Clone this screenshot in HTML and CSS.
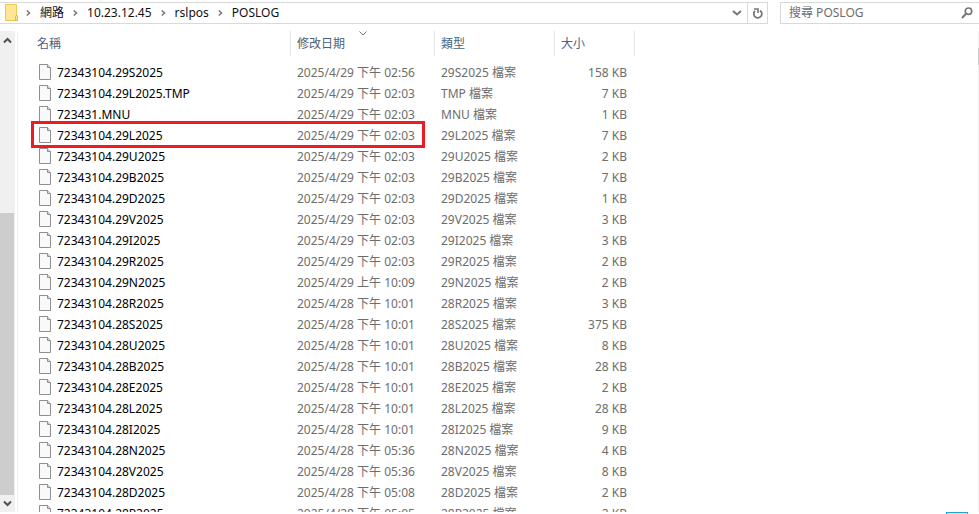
FILE: index.html
```html
<!DOCTYPE html>
<html lang="zh-Hant">
<head>
<meta charset="utf-8">
<title>POSLOG</title>
<link rel="stylesheet" href="styles.css">
</head>
<body>
<div class="explorer">
  <header class="toolbar">
    <nav class="address">
      <svg class="folder" viewBox="0 0 14 18"><path d="M.5 .5h11v11h1v5H.5z" fill="#ffe594" stroke="#ecc653"/><path d="M10.500 16.500v-4q0-1 1-1t1 1v4z" fill="#ffe594" stroke="#e3b63f"/></svg>
      <svg class="sep" viewBox="0 0 5 6"><path d="M.8 .5L3.500 3 .8 5.500"/></svg>
      <a href="#">網路</a>
      <svg class="sep" viewBox="0 0 5 6"><path d="M.8 .5L3.500 3 .8 5.500"/></svg>
      <a href="#">10.23.12.45</a>
      <svg class="sep" viewBox="0 0 5 6"><path d="M.8 .5L3.500 3 .8 5.500"/></svg>
      <a href="#">rslpos</a>
      <svg class="sep" viewBox="0 0 5 6"><path d="M.8 .5L3.500 3 .8 5.500"/></svg>
      <a href="#">POSLOG</a>
      <button class="history" aria-label="先前的位置"><svg width="10" height="6" viewBox="0 0 10 6"><path d="M1 1l4 3.500L9 1" fill="none" stroke="#777" stroke-width="2"/></svg></button>
      <button class="refresh" aria-label="重新整理"><svg width="10" height="11" viewBox="0 0 10 11"><path d="M7 2.500A4 4 0 1 1 2 3" fill="none" stroke="#777" stroke-width="1.800"/><path d="M1 1h4v4" fill="none" stroke="#777" stroke-width="1.600"/></svg></button>
    </nav>
    <label class="search">
      <input type="text" placeholder="搜尋 POSLOG" aria-label="搜尋 POSLOG">
      <svg width="12" height="12" viewBox="0 0 12 12" fill="none" stroke="#777"><circle cx="7.500" cy="4.200" r="3.200" stroke-width="1.700"/><path d="M5 6.800L1 11" stroke-width="2"/></svg>
    </label>
  </header>
  <main class="content">
    <div class="scrollbar">
      <svg width="9" height="7" viewBox="0 0 9 7"><path d="M1 5.500l3.500-3.500L8 5.500" fill="none" stroke="#505050" stroke-width="2"/></svg>
      <div class="track"><div class="thumb"></div></div>
      <svg width="9" height="7" viewBox="0 0 9 7"><path d="M1 1.500l3.500 3.500L8 1.500" fill="none" stroke="#505050" stroke-width="2"/></svg>
    </div>
    <div class="files">
      <table>
        <colgroup><col class="c-name"><col class="c-date"><col class="c-type"><col class="c-size"><col></colgroup>
        <thead><tr><th>名稱</th><th class="sorted">修改日期<svg width="8" height="5" viewBox="0 0 8 5"><path d="M.5 .5L4 4 7.500 .5" fill="none" stroke="#777"/></svg></th><th>類型</th><th>大小</th><td></td></tr></thead>
        <tbody id="rows"></tbody>
      </table>
    </div>
    <div class="edge"><div class="edge-thumb"></div></div>
  </main>
  <footer class="status"><button class="view" aria-label="詳細資料"></button></footer>
</div>
<script src="files.js"></script>
</body>
</html>
```
FILE: styles.css
```css
*, *::after { box-sizing: border-box; }
body {
  margin: 0;
  background: #fff;
  color: #000;
  font: 12px/20px "Noto Sans", "Noto Sans CJK TC", sans-serif;
}
button { padding: 0; border: 0; background: none; }
.explorer { display: flex; flex-direction: column; height: 100vh; overflow: hidden; }
.toolbar { display: flex; gap: 12px; padding-top: 2px; height: 31px; flex: none; }
.address, .search { display: flex; align-items: center; height: 22px; border: 1px solid #d9d9d9; }
.address { flex: 1; border-left: 0; padding-left: 5px; }
.address a { color: #111; text-decoration: none; }
.folder { width: 14px; height: 18px; margin-right: 7px; }
.sep { width: 5px; height: 6px; fill: none; stroke: #777; stroke-width: 1.5; }
.address a + .sep { margin-left: 9px; }
.sep + a { margin-left: 9px; }
.history { display: flex; margin-left: auto; margin-right: 5px; }
.refresh { display: flex; align-items: center; justify-content: center; width: 20px; height: 20px; border-left: 1px solid #d9d9d9; }
.search { width: 199px; border-right: 0; padding: 0 6px 0 8px; }
.search input { flex: 1; min-width: 0; padding: 0; border: 0; outline: 0; background: none; font: inherit; }
.search input::placeholder { color: #6d6d6d; opacity: 1; }
.content { display: flex; flex: 1; min-height: 0; }
.scrollbar { display: flex; flex-direction: column; align-items: center; width: 15px; padding: 6px 1px 5px 0; background: #f0f0f0; }
.scrollbar svg { flex: none; }
.track { display: flex; flex-direction: column; justify-content: flex-end; align-self: stretch; flex: 1; padding: 4px 0 5px; }
.thumb { height: 63%; background: #cdcdcd; }
.files { flex: 1; min-width: 0; margin-left: 2px; border-left: 1px solid #f0f0f0; overflow: hidden; }
table { width: 100%; table-layout: fixed; border-collapse: separate; border-spacing: 0; }
.c-name { width: 273px; }
.c-date { width: 144px; }
.c-type { width: 120px; }
.c-size { width: 80px; }
th { height: 25px; padding: 0 6px; border-right: 1px solid #e5e5e5; color: #4c607a; font-weight: 400; text-align: left; }
th:first-child { padding-left: 19px; }
.sorted { position: relative; }
.sorted svg { position: absolute; top: 0; left: 50%; margin-left: -4px; }
tbody::before { content: ""; display: block; height: 6px; }
tbody td { height: 21px; padding: 0 6px; color: #6d6d6d; white-space: nowrap; }
tbody td:first-child { padding-left: 21px; color: #000; }
.name { display: flex; align-items: center; gap: 6px; }
.doc { flex: none; width: 12px; height: 16px; margin-bottom: 2px; }
tbody td:nth-child(4) { text-align: right; padding-right: 8px; }
.marked { position: relative; }
.marked::after {
  content: "";
  position: absolute;
  top: -4px;
  left: 13px;
  width: 394px;
  height: 27px;
  border: 3px solid #ed1c24;
}
.edge { width: 1px; background: #f0f0f0; padding-top: 17px; }
.edge-thumb { height: 17px; background: #cdcdcd; }
.status { display: flex; justify-content: flex-end; flex: none; height: 2px; padding-right: 11px; overflow: hidden; }
.view { width: 22px; height: 20px; border: 1px solid #26a0da; background: #cbe8f6; }
```
FILE: files.js
```js
const files = [
  ["72343104.29S2025", "2025/4/29 下午 02:56", "29S2025", 158],
  ["72343104.29L2025.TMP", "2025/4/29 下午 02:03", "TMP", 7],
  ["723431.MNU", "2025/4/29 下午 02:03", "MNU", 1],
  ["72343104.29L2025", "2025/4/29 下午 02:03", "29L2025", 7, true],
  ["72343104.29U2025", "2025/4/29 下午 02:03", "29U2025", 2],
  ["72343104.29B2025", "2025/4/29 下午 02:03", "29B2025", 7],
  ["72343104.29D2025", "2025/4/29 下午 02:03", "29D2025", 1],
  ["72343104.29V2025", "2025/4/29 下午 02:03", "29V2025", 3],
  ["72343104.29I2025", "2025/4/29 下午 02:03", "29I2025", 3],
  ["72343104.29R2025", "2025/4/29 下午 02:03", "29R2025", 2],
  ["72343104.29N2025", "2025/4/29 上午 10:09", "29N2025", 2],
  ["72343104.28R2025", "2025/4/28 下午 10:01", "28R2025", 3],
  ["72343104.28S2025", "2025/4/28 下午 10:01", "28S2025", 375],
  ["72343104.28U2025", "2025/4/28 下午 10:01", "28U2025", 8],
  ["72343104.28B2025", "2025/4/28 下午 10:01", "28B2025", 28],
  ["72343104.28E2025", "2025/4/28 下午 10:01", "28E2025", 2],
  ["72343104.28L2025", "2025/4/28 下午 10:01", "28L2025", 28],
  ["72343104.28I2025", "2025/4/28 下午 10:01", "28I2025", 9],
  ["72343104.28N2025", "2025/4/28 下午 05:36", "28N2025", 4],
  ["72343104.28V2025", "2025/4/28 下午 05:36", "28V2025", 8],
  ["72343104.28D2025", "2025/4/28 下午 05:08", "28D2025", 2],
  ["72343104.28P2025", "2025/4/28 下午 05:05", "28P2025", 2]
];

const doc = '<svg class="doc" viewBox="0 0 12 16"><path d="M.5 .5H8.500L11.500 3.500v12H.5z" fill="#f8f9fa" stroke="#8f8f8f"/><path d="M8.500 .5v3h3" fill="#ddd" stroke="#8f8f8f"/></svg>';

document.getElementById("rows").innerHTML = files.map(([name, date, type, size, marked]) =>
  `<tr${marked ? ' class="marked"' : ""}><td><div class="name">${doc}<span>${name}</span></div></td><td>${date}</td><td>${type} 檔案</td><td>${size} KB</td><td></td></tr>`
).join("");
```
